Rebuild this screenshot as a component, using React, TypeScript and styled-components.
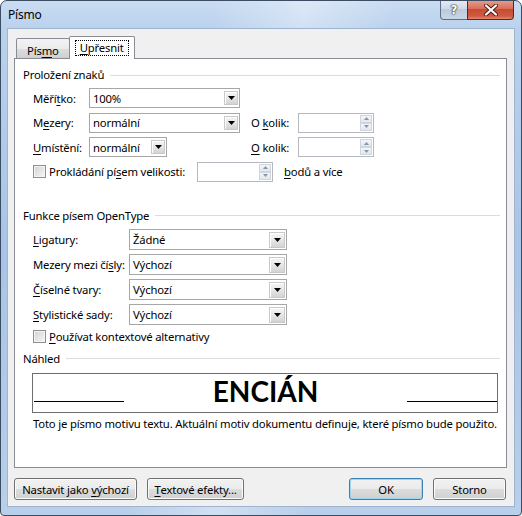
import React from "react";
import styled, { createGlobalStyle, css } from "styled-components";

const GlobalStyle = createGlobalStyle`
  html, body { margin: 0; padding: 0; background: #fff; }
  body {
    font-family: "Noto Sans", "Open Sans", sans-serif;
    font-size: 11.3px;
    letter-spacing: -0.18px;
    color: #000;
  }
`;

const Window = styled.div`
  box-sizing: border-box;
  width: 522px;
  height: 516px;
  border: 1px solid #3b4c63;
  border-radius: 7px 7px 4px 4px;
  background:
    linear-gradient(100deg, rgba(255,255,255,0) 35%, rgba(255,255,255,0.35) 50%, rgba(255,255,255,0) 65%),
    linear-gradient(180deg, #c9dcf2 0px, #bad1ed 28px, #a8c4e6 250px, #b9cfea 516px);
  padding: 0 6px 8px 6px;
  display: flex;
  flex-direction: column;
  overflow: hidden;
`;

const TitleBar = styled.div`
  height: 27px;
  display: flex;
  justify-content: space-between;
  align-items: flex-start;
`;

const Title = styled.div`
  margin-top: 6px;
  padding-left: 1px;
  line-height: 16px;
  font-size: 12px;
`;

const CaptionButtons = styled.div`
  display: flex;
  margin-top: -1px;
  margin-right: 1px;
`;

const CaptionButton = styled.div<{ $kind: "help" | "close" }>`
  box-sizing: border-box;
  height: 20px;
  display: flex;
  align-items: center;
  justify-content: center;
  ${(p) =>
    p.$kind === "help"
      ? css`
          width: 27px;
          border: 1px solid #5d6f86;
          border-top: none;
          border-right: none;
          border-radius: 0 0 0 4px;
          background: linear-gradient(180deg, #e4ecf5 0%, #d0dbe8 45%, #bccadb 50%, #c9d6e5 100%);
          color: #fff;
          font-family: "DejaVu Sans", sans-serif;
          font-weight: bold;
          font-size: 12px;
          text-shadow: 0 0 1px #2a3646, 0 0 1px #2a3646, 0 0 2px #2a3646;
        `
      : css`
          width: 47px;
          border: 1px solid #5e2619;
          border-top: none;
          border-radius: 0 0 4px 0;
          background: linear-gradient(180deg, #e8a08e 0%, #d7705a 45%, #c74a32 50%, #d05a40 85%, #e38a70 100%);
        `}
`;

const Client = styled.div`
  flex: 1;
  background: #f0f0f0;
  border: 1px solid #9fb4cf;
  padding: 7px 7px 0 6px;
  display: flex;
  flex-direction: column;
`;

const TabStrip = styled.div`
  display: flex;
  align-items: flex-start;
  height: 23px;
  padding-left: 2px;
  margin-bottom: -1px;
  position: relative;
  z-index: 1;
`;

const Tab = styled.div<{ $active?: boolean }>`
  box-sizing: border-box;
  border: 1px solid #898c95;
  border-bottom: none;
  border-radius: 2px 2px 0 0;
  display: flex;
  align-items: center;
  ${(p) =>
    p.$active
      ? css`
          height: 23px;
          background: #fff;
          padding: 0 5px 0 5px;
          margin-left: -1px;
        `
      : css`
          height: 20px;
          margin-top: 2px;
          padding: 3px 10px 0 10px;
          background: linear-gradient(180deg, #f3f3f3 0%, #ebebeb 50%, #dddddd 51%, #cfcfcf 100%);
        `}
`;

const FocusRect = styled.span`
  border: 1px dotted #000;
  padding: 0 4px;
  line-height: 14px;
  margin-top: -1px;
`;

const Key = styled.span`
  text-decoration: underline;
  text-underline-offset: 2px;
`;

const Panel = styled.div`
  box-sizing: border-box;
  height: 410px;
  background: #fff;
  border: 1px solid #898c95;
  padding: 8px 6px 0 8px;
  display: flex;
  flex-direction: column;
`;

const SectionHeader = styled.div<{ $top?: number }>`
  display: flex;
  align-items: center;
  gap: 6px;
  line-height: 16px;
  height: 16px;
  margin-top: ${(p) => p.$top ?? 0}px;
  &::after {
    content: "";
    flex: 1;
    height: 1px;
    background: #dcdcdc;
  }
`;

const SpacingGrid = styled.div`
  display: grid;
  grid-template-columns: 56px 151px 58px 76px;
  grid-auto-rows: 20px;
  row-gap: 4.5px;
  align-items: stretch;
  margin: 5px 0 0 10px;
`;

const OpenTypeGrid = styled.div`
  display: grid;
  grid-template-columns: 96px 158px;
  grid-auto-rows: 21px;
  row-gap: 4px;
  margin: 5px 0 0 10px;
`;

const FieldLabel = styled.span`
  grid-column: 1;
  display: flex;
  align-items: center;
  white-space: nowrap;
`;

const SideLabel = styled.span`
  display: flex;
  align-items: center;
  padding-left: 11px;
  white-space: nowrap;
`;

const ComboBox = styled.div<{ $w?: number }>`
  box-sizing: border-box;
  width: ${(p) => (p.$w ? `${p.$w}px` : "100%")};
  border: 1px solid #a7a7a7;
  background: #fff;
  display: flex;
  align-items: stretch;
`;

const ComboText = styled.span`
  flex: 1;
  display: flex;
  align-items: center;
  padding-left: 3px;
  white-space: nowrap;
`;

const DropButton = styled.span<{ $large?: boolean }>`
  box-sizing: border-box;
  display: flex;
  align-items: center;
  justify-content: center;
  border: 1px solid #c9c9c9;
  background: linear-gradient(180deg, #f6f6f6 0%, #e6e6e6 50%, #d3d3d3 100%);
  box-shadow: inset 1px 1px 0 #ffffff;
  ${(p) =>
    p.$large
      ? css`
          width: 16px;
          margin: 2px 1px 1px 0;
        `
      : css`
          width: 14px;
          margin: 2px 1px 2px 0;
        `}
`;

const SpinBox = styled.div`
  box-sizing: border-box;
  width: 76px;
  height: 20px;
  flex-shrink: 0;
  border: 1px solid #b5b8bf;
  background: #fff;
  display: flex;
  justify-content: flex-end;
  padding: 1px 1px 1px 0;
`;

const SpinButtons = styled.div`
  width: 12px;
  display: flex;
  flex-direction: column;
`;

const SpinButton = styled.span`
  flex: 1;
  box-sizing: border-box;
  border: 1px solid #d0d6de;
  background: linear-gradient(180deg, #f4f6f9 0%, #e1e7ee 100%);
  display: flex;
  align-items: center;
  justify-content: center;
`;

const CheckRow = styled.div<{ $top?: number; $span?: boolean }>`
  display: flex;
  align-items: center;
  ${(p) => (p.$span ? "grid-column: 1 / -1;" : "")}
  margin-top: ${(p) => p.$top ?? 0}px;
  height: ${(p) => (p.$span ? "auto" : "16px")};
  padding-left: ${(p) => (p.$span ? 0 : 10)}px;
`;

const CheckLabel = styled.label<{ $w?: number }>`
  display: flex;
  align-items: center;
  gap: 3px;
  white-space: nowrap;
  ${(p) => (p.$w ? `width: ${p.$w}px; flex-shrink: 0;` : "")}
`;

const CheckBox = styled.span`
  box-sizing: border-box;
  width: 13px;
  height: 13px;
  flex-shrink: 0;
  border: 1px solid #8e8f8f;
  background: linear-gradient(135deg, #d2d2d2 0%, #f7f7f7 100%);
  box-shadow: inset 0 0 0 1px #f4f4f4;
`;

const Trailing = styled.span`
  margin-left: 11px;
  white-space: nowrap;
`;

const PreviewBox = styled.div`
  box-sizing: border-box;
  margin: 6px 0 0 9px;
  width: 466px;
  height: 40px;
  border: 1px solid #6e6e6e;
  padding: 3px 0 0 1px;
  display: flex;
  align-items: baseline;
`;

const BaseLine = styled.div`
  width: 90px;
  height: 1px;
  background: #000;
`;

const PreviewText = styled.div`
  flex: 1;
  text-align: center;
  font-family: Lato, "Open Sans", sans-serif;
  font-weight: 700;
  font-size: 28px;
  letter-spacing: 0;
  line-height: 28px;
`;

const Caption = styled.div`
  margin: 3px 0 0 10px;
  line-height: 16px;
  white-space: nowrap;
`;

const ButtonRow = styled.div`
  display: flex;
  gap: 10px;
  margin-top: 10px;
  padding-right: 1px;
`;

const Spacer = styled.div`
  flex: 1;
`;

const PushButton = styled.div<{ $w: number; $default?: boolean }>`
  box-sizing: border-box;
  width: ${(p) => p.$w}px;
  height: 22px;
  border-radius: 3px;
  display: flex;
  align-items: center;
  justify-content: center;
  white-space: nowrap;
  border: 1px solid ${(p) => (p.$default ? "#3c7fb1" : "#707070")};
  background: linear-gradient(180deg, #f2f2f2 0%, #ebebeb 49%, #dddddd 50%, #cfcfcf 100%);
  box-shadow: inset 0 0 0 1px ${(p) => (p.$default ? "#9fd4f3" : "#fbfbfb")};
`;

const DownTriangle = () => (
  <svg width="7" height="4" viewBox="0 0 7 4">
    <path d="M0 0H7L3.5 4Z" fill="#000" />
  </svg>
);

const SpinArrow = ({ up }: { up?: boolean }) => (
  <svg width="5" height="3" viewBox="0 0 5 3">
    <path d={up ? "M0 3H5L2.5 0Z" : "M0 0H5L2.5 3Z"} fill="#8796a8" />
  </svg>
);

const Combo = ({ value, w, large }: { value: string; w?: number; large?: boolean }) => (
  <ComboBox $w={w}>
    <ComboText>{value}</ComboText>
    <DropButton $large={large}>
      <DownTriangle />
    </DropButton>
  </ComboBox>
);

const Spin = () => (
  <SpinBox>
    <SpinButtons>
      <SpinButton>
        <SpinArrow up />
      </SpinButton>
      <SpinButton>
        <SpinArrow />
      </SpinButton>
    </SpinButtons>
  </SpinBox>
);

export default function App() {
  return (
    <>
      <GlobalStyle />
      <Window>
        <TitleBar>
          <Title>Písmo</Title>
          <CaptionButtons>
            <CaptionButton $kind="help">?</CaptionButton>
            <CaptionButton $kind="close">
              <svg width="14" height="12" viewBox="0 0 14 12">
                <path d="M2 1.5L12 10.5M12 1.5L2 10.5" stroke="#4a1c14" strokeWidth="4" strokeLinecap="round" />
                <path d="M2 1.5L12 10.5M12 1.5L2 10.5" stroke="#ffffff" strokeWidth="2.2" strokeLinecap="round" />
              </svg>
            </CaptionButton>
          </CaptionButtons>
        </TitleBar>
        <Client>
          <TabStrip>
            <Tab>
              Pís<Key>m</Key>o
            </Tab>
            <Tab $active>
              <FocusRect>
                <Key>U</Key>přesnit
              </FocusRect>
            </Tab>
          </TabStrip>
          <Panel>
            <SectionHeader>Proložení znaků</SectionHeader>
            <SpacingGrid>
              <FieldLabel>
                Měří<Key>t</Key>ko:
              </FieldLabel>
              <Combo value="100%" />
              <FieldLabel>
                M<Key>e</Key>zery:
              </FieldLabel>
              <Combo value="normální" />
              <SideLabel>
                O&nbsp;<Key>k</Key>olik:
              </SideLabel>
              <Spin />
              <FieldLabel>
                <Key>U</Key>místění:
              </FieldLabel>
              <Combo value="normální" w={78} />
              <SideLabel>
                <Key>O</Key>&nbsp;kolik:
              </SideLabel>
              <Spin />
              <CheckRow $span>
                <CheckLabel $w={164}>
                  <CheckBox />
                  <span>
                    Prokládání pí<Key>s</Key>em velikosti:
                  </span>
                </CheckLabel>
                <Spin />
                <Trailing>
                  <Key>b</Key>odů a více
                </Trailing>
              </CheckRow>
            </SpacingGrid>

            <SectionHeader $top={26}>Funkce písem OpenType</SectionHeader>
            <OpenTypeGrid>
              <FieldLabel>
                <Key>L</Key>igatury:
              </FieldLabel>
              <Combo value="Žádné" large />
              <FieldLabel>
                Mezery mezi čí<Key>s</Key>ly:
              </FieldLabel>
              <Combo value="Výchozí" large />
              <FieldLabel>
                <Key>Č</Key>íselné tvary:
              </FieldLabel>
              <Combo value="Výchozí" large />
              <FieldLabel>
                <Key>S</Key>tylistické sady:
              </FieldLabel>
              <Combo value="Výchozí" large />
            </OpenTypeGrid>
            <CheckRow $top={4}>
              <CheckLabel>
                <CheckBox />
                <span>
                  <Key>P</Key>oužívat kontextové alternativy
                </span>
              </CheckLabel>
            </CheckRow>

            <SectionHeader $top={6}>Náhled</SectionHeader>
            <PreviewBox>
              <BaseLine />
              <PreviewText>ENCIÁN</PreviewText>
              <BaseLine />
            </PreviewBox>
            <Caption>Toto je písmo motivu textu. Aktuální motiv dokumentu definuje, které písmo bude použito.</Caption>
          </Panel>
          <ButtonRow>
            <PushButton $w={123}>
              Nastavit jako&nbsp;<Key>v</Key>ýchozí
            </PushButton>
            <PushButton $w={97}>
              <Key>T</Key>extové efekty...
            </PushButton>
            <Spacer />
            <PushButton $w={74} $default>
              OK
            </PushButton>
            <PushButton $w={73}>Storno</PushButton>
          </ButtonRow>
        </Client>
      </Window>
    </>
  );
}
